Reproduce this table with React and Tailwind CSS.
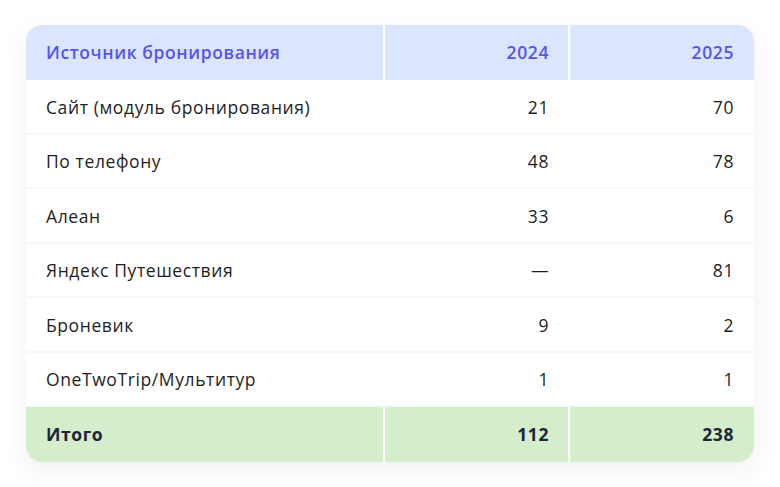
const rows = [
  ["Сайт (модуль бронирования)", "21", "70"],
  ["По телефону", "48", "78"],
  ["Алеан", "33", "6"],
  ["Яндекс Путешествия", "—", "81"],
  ["Броневик", "9", "2"],
  ["OneTwoTrip/Мультитур", "1", "1"],
];

export default function App() {
  return (
    <div
      className="w-[780px] h-[487px] bg-white pt-[25px] pl-[26px]"
      style={{ fontFamily: '"Open Sans", "Noto Sans", sans-serif' }}
    >
      <div className="w-[728px] rounded-2xl overflow-hidden bg-white shadow-[0_8px_24px_rgba(60,70,120,0.08)] text-[17.5px] tracking-[0.6px]">
        <div className="grid grid-cols-[357px_2px_183px_2px_184px] h-[55px] bg-[#dbe5fd] text-[#5654f0] font-semibold">
          <div className="flex items-center pl-5">Источник бронирования</div>
          <div className="bg-white" />
          <div className="flex items-center justify-end pr-[19px]">2024</div>
          <div className="bg-white" />
          <div className="flex items-center justify-end pr-5">2025</div>
        </div>
        {rows.map(([name, a, b]) => (
          <div
            key={name}
            className="grid grid-cols-[357px_2px_183px_2px_184px] h-[54.5px] border-b-2 border-[#f6f7fb] text-[#1e1e24]"
          >
            <div className="flex items-center pl-5 pt-px">{name}</div>
            <div />
            <div className="flex items-center justify-end pr-[19px] pt-px">{a}</div>
            <div />
            <div className="flex items-center justify-end pr-5 pt-px">{b}</div>
          </div>
        ))}
        <div className="grid grid-cols-[357px_2px_183px_2px_184px] h-[55px] bg-[#d4edcb] text-[#22243a] font-bold">
          <div className="flex items-center pl-5">Итого</div>
          <div className="bg-white" />
          <div className="flex items-center justify-end pr-[19px]">112</div>
          <div className="bg-white" />
          <div className="flex items-center justify-end pr-5">238</div>
        </div>
      </div>
    </div>
  );
}
